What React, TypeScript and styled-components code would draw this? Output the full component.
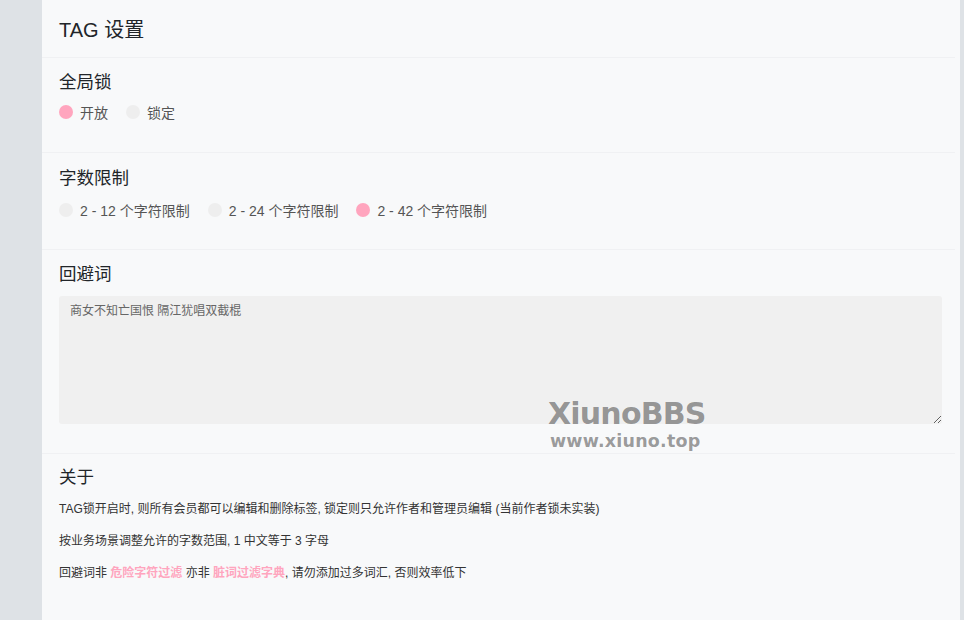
import React from "react";
import styled, { createGlobalStyle } from "styled-components";

const GlobalStyle = createGlobalStyle`
  html, body {
    margin: 0;
    padding: 0;
    background: #dee2e6;
    font-family: "Liberation Sans", "Noto Sans CJK SC", sans-serif;
  }
  * { box-sizing: border-box; }
`;

const Page = styled.div`
  display: flex;
  min-height: 620px;
  padding: 0 4px 0 42px;
  background: #dee2e6;
`;

const Card = styled.div`
  position: relative;
  flex: 1;
  display: flex;
  flex-direction: column;
  background: #f8f9fa;
  min-height: 620px;
`;

const Header = styled.div`
  height: 58px;
  padding: 18px 18px 0 17px;
  margin-right: 5px;
  border-bottom: 1px solid #f0f1f3;
`;

const HeaderTitle = styled.h4`
  margin: 0;
  font-size: 20px;
  line-height: 24px;
  font-weight: 400;
  color: #212529;
`;

const Section = styled.section<{ $pt: number; $pb: number; $last?: boolean }>`
  display: flex;
  flex-direction: column;
  padding: ${(p) => p.$pt}px 13px ${(p) => p.$pb}px 17px;
  margin-right: 5px;
  border-bottom: ${(p) => (p.$last ? "none" : "1px solid #f0f1f3")};
`;

const Title = styled.h5`
  margin: 0;
  font-size: 17.5px;
  line-height: 24px;
  font-weight: 400;
  color: #212529;
`;

const RadioRow = styled.div<{ $mt: number }>`
  display: flex;
  align-items: center;
  height: 20px;
  margin-top: ${(p) => p.$mt}px;
`;

const RadioItem = styled.label`
  display: flex;
  align-items: center;
  gap: 7px;
  margin-right: 18px;
  font-size: 14px;
  color: #555;
  cursor: pointer;
`;

const Dot = styled.span<{ $on?: boolean }>`
  width: 14px;
  height: 14px;
  border-radius: 50%;
  background: ${(p) => (p.$on ? "#ffa5be" : "#eeeeee")};
`;

const TextBox = styled.textarea`
  margin-top: 10px;
  width: 100%;
  height: 128px;
  padding: 6px 11px;
  border: none;
  border-radius: 3px;
  background: #f0f0f0;
  color: #666;
  font-family: "Liberation Sans", "Noto Sans CJK SC", sans-serif;
  font-size: 12px;
  line-height: 18px;
  resize: vertical;
  outline: none;
`;

const Para = styled.p<{ $first?: boolean }>`
  margin: ${(p) => (p.$first ? "11px" : "14px")} 0 0;
  font-size: 12px;
  line-height: 18px;
  color: #333;
`;

const Pink = styled.strong`
  color: #ffa5be;
  font-weight: 700;
`;

const Watermark = styled.div`
  position: absolute;
  left: 506px;
  top: 397px;
  display: flex;
  flex-direction: column;
  align-items: flex-start;
  font-family: "DejaVu Sans", sans-serif;
  font-weight: 700;
  color: rgba(0, 0, 0, 0.4);
  pointer-events: none;
`;

const WmBig = styled.span`
  font-size: 30px;
  line-height: 34px;
  letter-spacing: -0.8px;
`;

const WmSmall = styled.span`
  margin-left: 2px;
  font-size: 17.5px;
  line-height: 20px;
  letter-spacing: 0.2px;
`;

function Radio({ label, on }: { label: string; on?: boolean }) {
  return (
    <RadioItem>
      <Dot $on={on} />
      {label}
    </RadioItem>
  );
}

export default function App() {
  return (
    <>
      <GlobalStyle />
      <Page>
        <Card>
          <Header>
            <HeaderTitle>TAG 设置</HeaderTitle>
          </Header>

          <Section $pt={12} $pb={30}>
            <Title>全局锁</Title>
            <RadioRow $mt={8}>
              <Radio label="开放" on />
              <Radio label="锁定" />
            </RadioRow>
          </Section>

          <Section $pt={13} $pb={29}>
            <Title>字数限制</Title>
            <RadioRow $mt={10}>
              <Radio label="2 - 12 个字符限制" />
              <Radio label="2 - 24 个字符限制" />
              <Radio label="2 - 42 个字符限制" on />
            </RadioRow>
          </Section>

          <Section $pt={12} $pb={29}>
            <Title>回避词</Title>
            <TextBox defaultValue="商女不知亡国恨 隔江犹唱双截棍" />
          </Section>

          <Section $pt={11} $pb={30} $last>
            <Title>关于</Title>
            <Para $first>
              TAG锁开启时, 则所有会员都可以编辑和删除标签, 锁定则只允许作者和管理员编辑 (当前作者锁未实装)
            </Para>
            <Para>按业务场景调整允许的字数范围, 1 中文等于 3 字母</Para>
            <Para>
              回避词非 <Pink>危险字符过滤</Pink> 亦非 <Pink>脏词过滤字典</Pink>, 请勿添加过多词汇, 否则效率低下
            </Para>
          </Section>

          <Watermark>
            <WmBig>XiunoBBS</WmBig>
            <WmSmall>www.xiuno.top</WmSmall>
          </Watermark>
        </Card>
      </Page>
    </>
  );
}
